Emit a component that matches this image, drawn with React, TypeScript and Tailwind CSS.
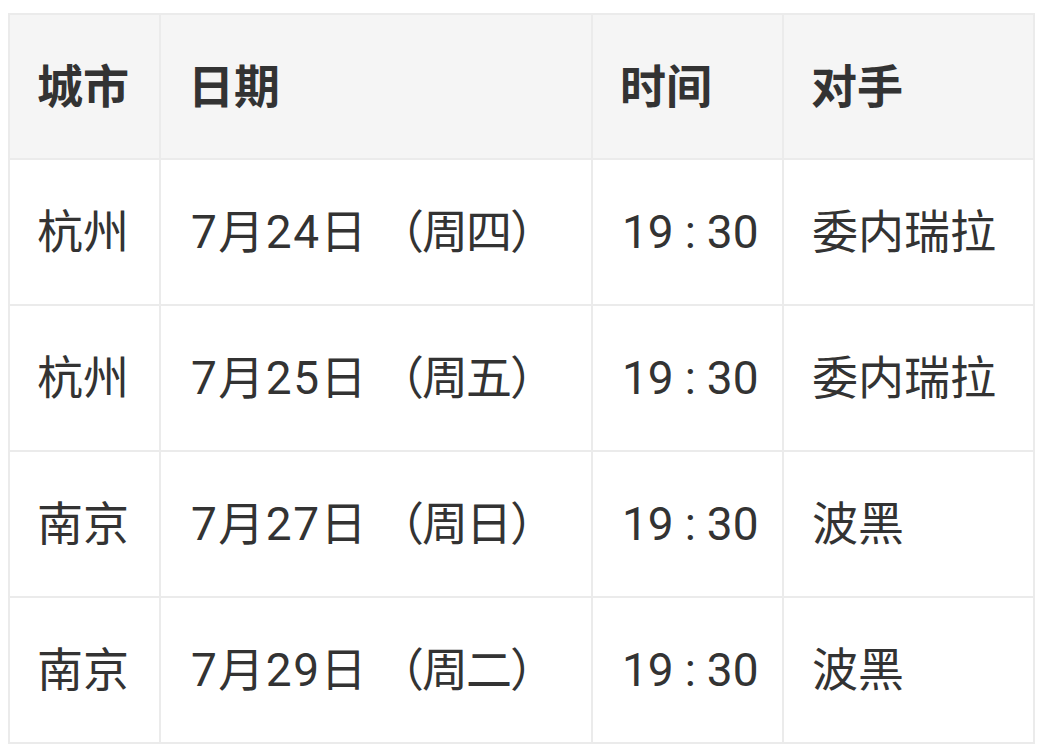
const rows = [
  { city: '杭州', day: '7月24日', week: '（周四）', rival: '委内瑞拉' },
  { city: '杭州', day: '7月25日', week: '（周五）', rival: '委内瑞拉' },
  { city: '南京', day: '7月27日', week: '（周日）', rival: '波黑' },
  { city: '南京', day: '7月29日', week: '（周二）', rival: '波黑' },
];

const font = { fontFamily: 'Roboto, "Noto Sans CJK SC", sans-serif' };

export default function App() {
  return (
    <div className="min-h-screen bg-white pl-[8px] pt-[13px]" style={font}>
      <table className="table-fixed border-collapse text-[46px] leading-none text-[#333]">
        <colgroup>
          <col className="w-[151px]" />
          <col className="w-[432px]" />
          <col className="w-[191px]" />
          <col className="w-[251px]" />
        </colgroup>
        <thead>
          <tr className="h-[145px] bg-[#f5f5f5]">
            {['城市', '日期', '时间', '对手'].map((h) => (
              <th
                key={h}
                className="border-2 border-[#ebebeb] pl-[27px] text-left font-bold text-[#333]"
              >
                {h}
              </th>
            ))}
          </tr>
        </thead>
        <tbody>
          {rows.map((r, i) => (
            <tr key={i} className="h-[146px]">
              <td className="border-2 border-[#ebebeb] pl-[27px]">{r.city}</td>
              <td className="border-2 border-[#ebebeb] pl-[30px]">
                <span className="tracking-[1.5px]">{r.day}</span>
                <span className="ml-[10px] tracking-[-2px]">{r.week}</span>
              </td>
              <td className="border-2 border-[#ebebeb] pl-[29px]">
                19
                <span className="px-[11px]">:</span>
                30
              </td>
              <td className="border-2 border-[#ebebeb] pl-[28px]">{r.rival}</td>
            </tr>
          ))}
        </tbody>
      </table>
    </div>
  );
}
